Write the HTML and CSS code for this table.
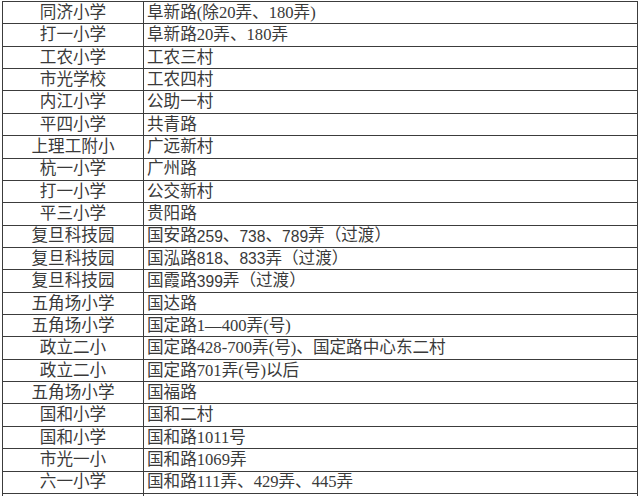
FILE: index.html
```html
<!DOCTYPE html>
<html lang="zh">
<head>
<meta charset="utf-8">
<link rel="stylesheet" href="styles.css">
</head>
<body>
<div class="sheet">
  <div class="c1">同济小学</div><div class="c2">阜新路(除20弄、180弄)</div>
  <div class="c1">打一小学</div><div class="c2">阜新路20弄、180弄</div>
  <div class="c1">工农小学</div><div class="c2">工农三村</div>
  <div class="c1">市光学校</div><div class="c2">工农四村</div>
  <div class="c1">内江小学</div><div class="c2">公助一村</div>
  <div class="c1">平四小学</div><div class="c2">共青路</div>
  <div class="c1">上理工附小</div><div class="c2">广远新村</div>
  <div class="c1">杭一小学</div><div class="c2">广州路</div>
  <div class="c1">打一小学</div><div class="c2">公交新村</div>
  <div class="c1">平三小学</div><div class="c2">贵阳路</div>
  <div class="c1">复旦科技园</div><div class="c2">国安路<span class="num">259</span>、<span class="num">738</span>、<span class="num">789</span>弄（过渡）</div>
  <div class="c1">复旦科技园</div><div class="c2">国泓路<span class="num">818</span>、<span class="num">833</span>弄（过渡）</div>
  <div class="c1">复旦科技园</div><div class="c2">国霞路<span class="num">399</span>弄（过渡）</div>
  <div class="c1">五角场小学</div><div class="c2">国达路</div>
  <div class="c1">五角场小学</div><div class="c2">国定路1—400弄(号)</div>
  <div class="c1">政立二小</div><div class="c2">国定路428-700弄(号)、国定路中心东二村</div>
  <div class="c1">政立二小</div><div class="c2">国定路701弄(号)以后</div>
  <div class="c1">五角场小学</div><div class="c2">国福路</div>
  <div class="c1">国和小学</div><div class="c2">国和二村</div>
  <div class="c1">国和小学</div><div class="c2">国和路1011号</div>
  <div class="c1">市光一小</div><div class="c2">国和路1069弄</div>
  <div class="c1">六一小学</div><div class="c2">国和路111弄、429弄、445弄</div>
  <div class="c1"></div><div class="c2"></div>
</div>
</body>
</html>
```
FILE: styles.css
```css
html, body {
  margin: 0;
  padding: 0;
  background: #ffffff;
  overflow: hidden;
}
body {
  font-family: "Liberation Serif", "Noto Sans CJK SC", serif;
  font-size: 16.6px;
  color: #3a3a3a;
}
.sheet {
  margin: 1px 0 0 2px;
  width: 636px;
  box-sizing: border-box;
  display: grid;
  grid-template-columns: 140px 1fr;
  grid-auto-rows: 21.37px;
  gap: 1px;
  padding: 1px;
  background: #3c3c3c;
}
.c1, .c2 {
  background: #ffffff;
  display: flex;
  align-items: center;
  white-space: nowrap;
  overflow: hidden;
  line-height: 1;
  padding-top: 1px;
  box-sizing: border-box;
}
.c1 {
  justify-content: center;
}
.c2 {
  padding-left: 3px;
}
.num {
  font-family: "Liberation Sans", sans-serif;
  font-size: 15.6px;
}
```
